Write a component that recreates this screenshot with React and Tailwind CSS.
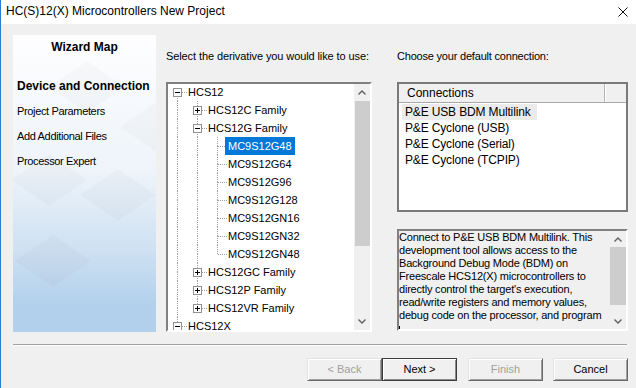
import React from 'react';

const tree = [
  { level: 0, label: 'HCS12', exp: 'open', guides: [], top: false, bottom: true },
  { level: 1, label: 'HCS12C Family', exp: 'closed', guides: [true], top: true, bottom: true },
  { level: 1, label: 'HCS12G Family', exp: 'open', guides: [true], top: true, bottom: true },
  { level: 2, label: 'MC9S12G48', guides: [true, true], top: true, bottom: true, selected: true },
  { level: 2, label: 'MC9S12G64', guides: [true, true], top: true, bottom: true },
  { level: 2, label: 'MC9S12G96', guides: [true, true], top: true, bottom: true },
  { level: 2, label: 'MC9S12G128', guides: [true, true], top: true, bottom: true },
  { level: 2, label: 'MC9S12GN16', guides: [true, true], top: true, bottom: true },
  { level: 2, label: 'MC9S12GN32', guides: [true, true], top: true, bottom: true },
  { level: 2, label: 'MC9S12GN48', guides: [true, true], top: true, bottom: false },
  { level: 1, label: 'HCS12GC Family', exp: 'closed', guides: [true], top: true, bottom: true },
  { level: 1, label: 'HCS12P Family', exp: 'closed', guides: [true], top: true, bottom: true },
  { level: 1, label: 'HCS12VR Family', exp: 'closed', guides: [true], top: true, bottom: false },
  { level: 0, label: 'HCS12X', exp: 'open', guides: [], top: true, bottom: false },
];

const connections = [
  'P&E USB BDM Multilink',
  'P&E Cyclone (USB)',
  'P&E Cyclone (Serial)',
  'P&E Cyclone (TCPIP)',
];

const description = [
  'Connect to P&E USB BDM Multilink. This',
  'development tool allows access to the',
  'Background Debug Mode (BDM) on',
  'Freescale HCS12(X) microcontrollers to',
  "directly control the target's execution,",
  'read/write registers and memory values,',
  'debug code on the processor, and program',
];

const dots = { stroke: '#a0a0a0', strokeDasharray: '1 1' };

function TreeCell({ top, bottom, horiz, exp }) {
  return (
    <svg width="20" height="18" className="shrink-0" shapeRendering="crispEdges">
      {top && <line x1="9.5" y1="0" x2="9.5" y2="9" {...dots} />}
      {bottom && <line x1="9.5" y1="9" x2="9.5" y2="18" {...dots} />}
      {horiz && <line x1="10" y1="9.5" x2="20" y2="9.5" {...dots} />}
      {exp && (
        <g>
          <rect x="5.5" y="5.5" width="8" height="8" fill="#fff" stroke="#919191" />
          <line x1="7" y1="9.5" x2="12" y2="9.5" stroke="#000" />
          {exp === 'closed' && <line x1="9.5" y1="7" x2="9.5" y2="12" stroke="#000" />}
        </g>
      )}
    </svg>
  );
}

function Chevron({ up }) {
  return (
    <svg width="8" height="5" viewBox="0 0 8 5">
      <path d={up ? 'M0.5 4.5L4 1L7.5 4.5' : 'M0.5 0.5L4 4L7.5 0.5'} fill="none" stroke="#606060" strokeWidth="1.4" />
    </svg>
  );
}

function Button({ children, disabled, primary }) {
  return (
    <div
      className={
        'w-[75px] h-[23px] flex items-center justify-center text-[11px] bg-[#f0f0f0] border ' +
        (primary
          ? 'border-[#3c3c3c] shadow-[inset_1px_1px_0_#fff,inset_-1px_-1px_0_#8a8a8a] text-black'
          : 'border-t-[#e3e3e3] border-l-[#e3e3e3] border-r-[#696969] border-b-[#696969] shadow-[inset_1px_1px_0_#fff,inset_-1px_-1px_0_#a0a0a0] ') +
        (disabled ? 'text-[#a0a0a0]' : ' text-black')
      }
    >
      {children}
    </div>
  );
}

export default function App() {
  return (
    <div className="w-[636px] h-[388px] bg-[#f0f0f0] border-l border-[#2b7cd3] overflow-hidden font-['Liberation_Sans',Arial,sans-serif] text-black">
      {/* title bar */}
      <div className="h-[24px] bg-white flex items-center pl-[5px] pr-[8px]">
        <span className="text-[12px] leading-[14px] -mt-[2px]">HC(S)12(X) Microcontrollers New Project</span>
        <svg className="ml-auto -mt-[1px]" width="10" height="10" viewBox="0 0 10 10">
          <path d="M0.5 0.5L9.5 9.5M9.5 0.5L0.5 9.5" stroke="#111" strokeWidth="1" />
        </svg>
      </div>

      <div className="pl-[12px] pt-[11px] flex items-start">
        {/* wizard map */}
        <div className="relative w-[143px] h-[297px] bg-[linear-gradient(to_bottom,#fefeff_0%,#eef4fa_45%,#cfe1f2_72%,#b3d1ec_90%,#b1d0eb_100%)]">
          <svg className="absolute inset-0" width="143" height="297">
            <g fill="#000" fillOpacity="0.02">
              <polygon points="74,26 112,52 74,78 36,52" />
              <polygon points="143,67 179,92 143,117 107,92" />
              <polygon points="36,119 74,145 36,171 -2,145" />
              <polygon points="105,134 143,160 105,186 67,160" />
              <polygon points="40,200 78,226 40,252 2,226" />
            </g>
          </svg>
          <div className="relative pt-[5px] pl-[4px]">
            <div className="h-[14px] leading-[14px] text-[12px] font-bold text-center pr-[4px]">Wizard Map</div>
            <div className="mt-[20px] h-[25px] leading-[25px] text-[12px] font-bold whitespace-nowrap">Device and Connection</div>
            <div className="h-[25px] leading-[25px] text-[11px] tracking-[-0.35px]">Project Parameters</div>
            <div className="h-[25px] leading-[25px] text-[11px] tracking-[-0.35px]">Add Additional Files</div>
            <div className="h-[25px] leading-[25px] text-[11px] tracking-[-0.35px]">Processor Expert</div>
          </div>
        </div>

        {/* derivative tree */}
        <div className="ml-[10px] w-[206px] shrink-0">
          <div className="h-[47px] pt-[14px] text-[11px] leading-[14px] tracking-[-0.1px] whitespace-nowrap">
            Select the derivative you would like to use:
          </div>
          <div className="h-[250px] flex overflow-hidden bg-white border-2 border-t-[#808080] border-l-[#808080] border-r-white border-b-white">
            <div className="flex-1 -mt-px overflow-hidden">
              {tree.map((row, i) => (
                <div key={i} className="flex h-[18px] items-center">
                  {row.guides.map((g, j) => (
                    <TreeCell key={j} top={g} bottom={g} />
                  ))}
                  <TreeCell top={row.top} bottom={row.bottom} horiz exp={row.exp} />
                  <span
                    className={
                      '-ml-[3px] px-[3px] h-[18px] leading-[18px] text-[11px] whitespace-nowrap ' +
                      (row.selected ? 'bg-[#0078d7] text-white' : 'text-black')
                    }
                  >
                    {row.label}
                  </span>
                </div>
              ))}
            </div>
            <div className="w-[16px] flex flex-col bg-[#f0f0f0]">
              <div className="h-[17px] flex items-center justify-center">
                <Chevron up />
              </div>
              <div className="h-[145px] ml-px bg-[#cdcdcd]" />
              <div className="flex-1" />
              <div className="h-[17px] flex items-center justify-center">
                <Chevron />
              </div>
            </div>
          </div>
        </div>

        {/* connection */}
        <div className="ml-[25px] w-[231px] shrink-0">
          <div className="h-[47px] pt-[14px] text-[11px] leading-[14px] tracking-[-0.2px] whitespace-nowrap">
            Choose your default connection:
          </div>
          <div className="h-[130px] bg-white border-2 border-[#7a7a7a] overflow-hidden">
            <div className="flex h-[19px] bg-[#f0f0f0] border-b border-[#a8a8a8]">
              <div className="w-[206px] border-r border-[#b4b4b4] pl-[8px] text-[12px] leading-[18px]">Connections</div>
              <div className="flex-1 border-l border-white" />
            </div>
            <div className="pt-px">
              {connections.map((c, i) => (
                <div key={c} className="h-[16px] flex ml-[3px]">
                  <span
                    className={
                      'pl-[3px] pr-[6px] leading-[16px] text-[12px] tracking-[-0.15px] whitespace-nowrap ' +
                      (i === 0 ? 'bg-[#ebebeb]' : '')
                    }
                  >
                    {c}
                  </span>
                </div>
              ))}
            </div>
          </div>

          <div className="mt-[17px] h-[102px] flex overflow-hidden bg-[#f0f0f0] border-2 border-t-[#808080] border-l-[#808080] border-r-white border-b-white">
            <div className="flex-1 overflow-hidden text-[11px] leading-[13px] tracking-[-0.2px]">
              {description.map((l) => (
                <div key={l} className="whitespace-nowrap">
                  {l}
                </div>
              ))}
              <div className="h-[13px] flex items-end">
                <span className="w-px h-[9px] bg-black" />
              </div>
            </div>
            <div className="w-[17px] flex flex-col">
              <div className="h-[16px] flex items-center justify-center">
                <Chevron up />
              </div>
              <div className="h-[58px] ml-px bg-[#cdcdcd]" />
              <div className="flex-1" />
              <div className="h-[16px] flex items-center justify-center">
                <Chevron />
              </div>
            </div>
          </div>
        </div>
      </div>

      <div className="mt-[12px] ml-[12px] w-[614px] border-t border-[#a0a0a0] border-b border-b-white" />

      <div className="mt-[12px] ml-[306px] flex">
        <Button disabled>&lt; Back</Button>
        <Button primary>Next &gt;</Button>
        <div className="ml-[11px]">
          <Button disabled>Finish</Button>
        </div>
        <div className="ml-[10px]">
          <Button>Cancel</Button>
        </div>
      </div>
    </div>
  );
}
